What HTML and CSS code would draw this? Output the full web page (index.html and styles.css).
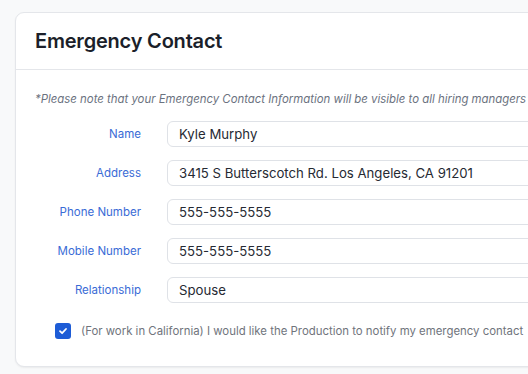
FILE: index.html
```html
<!DOCTYPE html>
<html lang="en">

<head>
    <meta charset="utf-8">
    <meta name="viewport" content="width=device-width, initial-scale=1.0">
    <title>Emergency Contact</title>
    <link rel="stylesheet" href="styles.css">
</head>

<body>
    <section class="kort">
        <header class="kort-top">
            <h1>Emergency Contact</h1>
        </header>

        <div class="kort-indhold">
            <p class="note">*Please note that your Emergency Contact Information will be visible to all hiring managers</p>

            <form class="felter">
                <label for="navn">Name</label>
                <input id="navn" type="text" value="Kyle Murphy">

                <label for="adresse">Address</label>
                <input id="adresse" type="text" value="3415 S Butterscotch Rd. Los Angeles, CA 91201">

                <label for="telefon">Phone Number</label>
                <input id="telefon" type="text" value="555-555-5555">

                <label for="mobil">Mobile Number</label>
                <input id="mobil" type="text" value="555-555-5555">

                <label for="relation">Relationship</label>
                <input id="relation" type="text" value="Spouse">
            </form>

            <div class="samtykke">
                <span class="boks">
                    <svg width="10" height="10" viewBox="0 0 10 10">
                        <path d="M2 5.2 L4.1 7.2 L8 3" fill="none" stroke="#fff" stroke-width="1.8" stroke-linecap="round" stroke-linejoin="round" />
                    </svg>
                </span>
                <span class="samtykke-tekst">(For work in California) I would like the Production to notify my emergency contact</span>
            </div>
        </div>
    </section>
</body>

</html>
```

FILE: styles.css
```css
*,
body * {
    box-sizing: border-box;
}

body {
    margin: 0;
    padding: 12px 0 0 15px;
    background-color: #f8f9fa;
    font-family: Inter, "Noto Sans", sans-serif;
    overflow: hidden;
    width: 528px;
    height: 374px;
}

.kort {
    width: 640px;
    background-color: #fff;
    border: 1px solid #e4e6ea;
    border-radius: 9px;
    box-shadow: 0 1px 2px rgba(0, 0, 0, 0.06);
}

.kort-top {
    padding: 14px 19px;
    border-bottom: 1px solid #e4e6ea;
}

h1 {
    margin: 0;
    font-size: 20px;
    line-height: 28px;
    font-weight: 600;
    letter-spacing: -0.2px;
    color: #1b1f2a;
}

.kort-indhold {
    padding: 21px 19px 27px;
}

.note {
    margin: 0 0 14px;
    font-size: 11.4px;
    line-height: 16px;
    font-style: italic;
    color: #6b7280;
    white-space: nowrap;
}

.felter {
    display: grid;
    grid-template-columns: 106px 1fr;
    column-gap: 26px;
    row-gap: 13px;
    align-items: center;
}

.felter label {
    text-align: right;
    font-size: 11.5px;
    color: #3a6bd6;
}

.felter input {
    height: 26px;
    padding: 0 11px;
    border: 1px solid #dfe2e7;
    border-radius: 6px;
    font-family: inherit;
    font-size: 13.2px;
    color: #262a33;
}

.samtykke {
    display: flex;
    align-items: center;
    gap: 10px;
    margin-top: 20px;
    padding-left: 20px;
}

.boks {
    width: 16px;
    height: 16px;
    border-radius: 3px;
    background-color: #1d5cd6;
    display: flex;
    align-items: center;
    justify-content: center;
    flex-shrink: 0;
}

.samtykke-tekst {
    font-size: 11.4px;
    color: #70747c;
    white-space: nowrap;
}
```
